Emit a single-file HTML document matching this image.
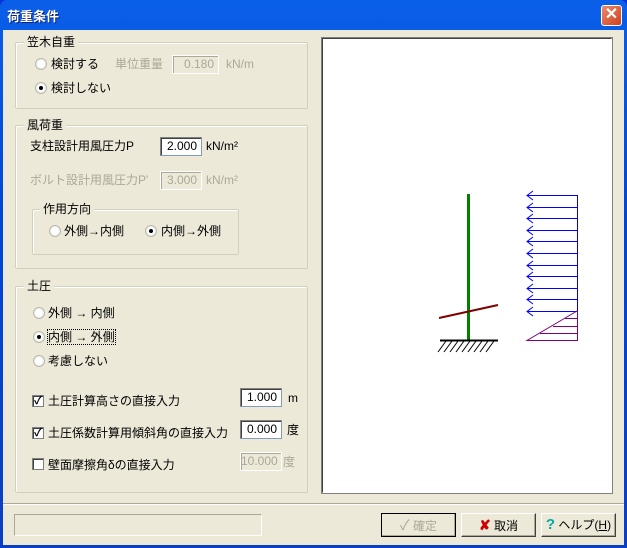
<!DOCTYPE html>
<html><head><meta charset="utf-8"><style>
*{margin:0;padding:0;box-sizing:border-box}
body{width:627px;height:548px;overflow:hidden;background:#0831d9;font-family:"Liberation Sans","Noto Sans CJK JP",sans-serif;font-size:12px;color:#000}
.win{position:absolute;left:0;top:0;width:627px;height:548px;background:linear-gradient(#0a5fe8,#0046d5 40%,#0a3fc4);border-radius:7px 7px 0 0}
.title{position:absolute;left:7px;top:6px;color:#fff;font-weight:bold;font-size:13px;text-shadow:1px 1px #0a1e6e}
.close{position:absolute;left:601px;top:5px;width:21px;height:21px;background:linear-gradient(135deg,#e88a6c,#d0401c);border:1px solid #fff;border-radius:3px;color:#fff;font-size:16px;font-weight:bold;line-height:18px;text-align:center}
.client{position:absolute;left:3px;top:30px;width:621px;height:515px;background:#ece9d8}
.a{position:absolute;white-space:nowrap;line-height:14px}
.g{color:#aca899}
.grp{position:absolute;border:1px solid #d0d0bf;border-radius:2px;box-shadow:inset 1px 1px #fff}
.lab{position:absolute;background:#ece9d8;padding:0 3px;line-height:14px;white-space:nowrap}
.inp{position:absolute;background:#fff;border:1px solid #7f9db9;border-top-color:#808080;border-left-color:#808080;box-shadow:inset 1px 1px #404040;text-align:right;padding-right:4px;line-height:16px;font-size:12px;white-space:nowrap}
.inp.d{background:#ece9d8;color:#aca899;box-shadow:inset 1px 1px #aca899;border-color:#fff}
.rad{position:absolute;width:12px;height:12px;border-radius:50%;background:radial-gradient(#fff 40%,#dcdcd0);border:1px solid #b9b9ae}
.rad.on::after{content:"";position:absolute;left:3px;top:3px;width:4px;height:4px;border-radius:50%;background:#000}
.chk{position:absolute;width:12px;height:12px;background:#fff;border:1px solid #808080;box-shadow:inset 1px 1px #404040;font-size:11px;line-height:10px;text-align:center;font-weight:bold}
.btn{position:absolute;width:75px;height:24px;border:1px solid #fff;border-right-color:#404040;border-bottom-color:#404040;box-shadow:inset -1px -1px #aca899;text-align:center;line-height:22px;white-space:nowrap}
</style></head><body>
<div class="win">
<div class="title">荷重条件</div>
<div class="close">✕</div>
</div>
<div class="client"></div>
<div style="position:absolute;left:0;top:0">
<div class="grp" style="left:15px;top:42px;width:293px;height:67px"></div>
<div class="lab" style="left:24px;top:35px">笠木自重</div>
<div class="rad" style="left:35px;top:58px"></div><div class="a" style="left:51px;top:57px">検討する</div>
<div class="a g" style="left:115px;top:57px">単位重量</div>
<div class="inp d" style="left:172px;top:55px;width:47px;height:19px">0.180</div>
<div class="a g" style="left:226px;top:57px">kN/m</div>
<div class="rad on" style="left:35px;top:82px"></div><div class="a" style="left:51px;top:81px">検討しない</div>
<div class="grp" style="left:15px;top:125px;width:293px;height:144px"></div>
<div class="lab" style="left:24px;top:118px">風荷重</div>
<div class="a" style="left:30px;top:139px">支柱設計用風圧力P</div>
<div class="inp" style="left:160px;top:137px;width:42px;height:19px">2.000</div>
<div class="a" style="left:206px;top:139px">kN/m²</div>
<div class="a g" style="left:30px;top:173px">ボルト設計用風圧力P'</div>
<div class="inp d" style="left:160px;top:171px;width:42px;height:19px">3.000</div>
<div class="a g" style="left:206px;top:173px">kN/m²</div>
<div class="grp" style="left:32px;top:209px;width:207px;height:46px"></div>
<div class="lab" style="left:40px;top:202px">作用方向</div>
<div class="rad" style="left:49px;top:225px"></div><div class="a" style="left:64px;top:224px">外側→内側</div>
<div class="rad on" style="left:145px;top:225px"></div><div class="a" style="left:161px;top:224px">内側→外側</div>
<div class="grp" style="left:15px;top:286px;width:293px;height:207px"></div>
<div class="lab" style="left:24px;top:279px">土圧</div>
<div class="rad" style="left:33px;top:307px"></div><div class="a" style="left:48px;top:306px">外側 → 内側</div>
<div class="rad on" style="left:33px;top:331px"></div><div class="a" style="left:48px;top:330px;outline:1px dotted #000">内側 → 外側</div>
<div class="rad" style="left:33px;top:355px"></div><div class="a" style="left:48px;top:354px">考慮しない</div>
<div class="chk" style="left:32px;top:395px">✓</div><div class="a" style="left:48px;top:394px">土圧計算高さの直接入力</div>
<div class="inp" style="left:240px;top:388px;width:42px;height:19px">1.000</div>
<div class="a" style="left:288px;top:391px">m</div>
<div class="chk" style="left:32px;top:427px">✓</div><div class="a" style="left:48px;top:426px">土圧係数計算用傾斜角の直接入力</div>
<div class="inp" style="left:240px;top:420px;width:42px;height:19px">0.000</div>
<div class="a" style="left:287px;top:423px">度</div>
<div class="chk" style="left:32px;top:458px"></div><div class="a" style="left:48px;top:458px">壁面摩擦角δの直接入力</div>
<div class="inp d" style="left:240px;top:452px;width:42px;height:19px">10.000</div>
<div class="a g" style="left:283px;top:455px">度</div>
<div style="position:absolute;left:3px;top:503px;width:621px;height:2px;border-top:1px solid #aca899;border-bottom:1px solid #fff"></div>
<div style="position:absolute;left:14px;top:514px;width:248px;height:22px;border:1px solid #aca899;border-right-color:#fff;border-bottom-color:#fff"></div>
<div class="btn" style="left:381px;top:513px;border:1px solid #000;color:#aca899"><span style="font-size:14px">✓</span> 確定</div>
<div class="btn" style="left:461px;top:513px"><span style="color:#c00;font-weight:bold;font-size:14px">✘</span> 取消</div>
<div class="btn" style="left:541px;top:513px"><span style="color:#0aa;font-weight:bold;font-size:15px">?</span> ヘルプ(<u>H</u>)</div>
<div style="position:absolute;left:322px;top:38px;width:290px;height:455px;background:#fff;border:1px solid #404040;border-right-color:#fff;border-bottom-color:#fff;outline:1px solid #808080"></div>
<svg style="position:absolute;left:0;top:0" width="627" height="548">
<line x1="468.5" y1="194" x2="468.5" y2="340" stroke="#008000" stroke-width="3"/>
<line x1="439" y1="318" x2="498" y2="305" stroke="#800000" stroke-width="2"/>
<line x1="440" y1="340.5" x2="498" y2="340.5" stroke="#000" stroke-width="2"/>
<g stroke="#000">
<path d="M446 341l-8 11M452 341l-8 11M458 341l-8 11M464 341l-8 11M470 341l-8 11M476 341l-8 11M482 341l-8 11M488 341l-8 11M494 341l-8 11"/>
</g>
<g stroke="#0000ff" fill="none">
<line x1="577.5" y1="195" x2="577.5" y2="311"/>
<path d="M527 195.5h50M527 207.5h50M527 218.5h50M527 230.5h50M527 241.5h50M527 253.5h50M527 265.5h50M527 276.5h50M527 288.5h50M527 299.5h50M527 311.5h50"/>
<path d="M533 191l-6 4.5 6 4.5M533 203l-6 4.5 6 4.5M533 214l-6 4.5 6 4.5M533 226l-6 4.5 6 4.5M533 237l-6 4.5 6 4.5M533 249l-6 4.5 6 4.5M533 261l-6 4.5 6 4.5M533 272l-6 4.5 6 4.5M533 284l-6 4.5 6 4.5M533 295l-6 4.5 6 4.5M533 307l-6 4.5 6 4.5"/>
</g>
<g stroke="#800080" fill="none">
<path d="M577.5 311v29.5H527L577 311"/>
<path d="M565 318.5h12M553 326.5h24M540 333.5h37"/>
</g>
</svg>
</div>
</body></html>
